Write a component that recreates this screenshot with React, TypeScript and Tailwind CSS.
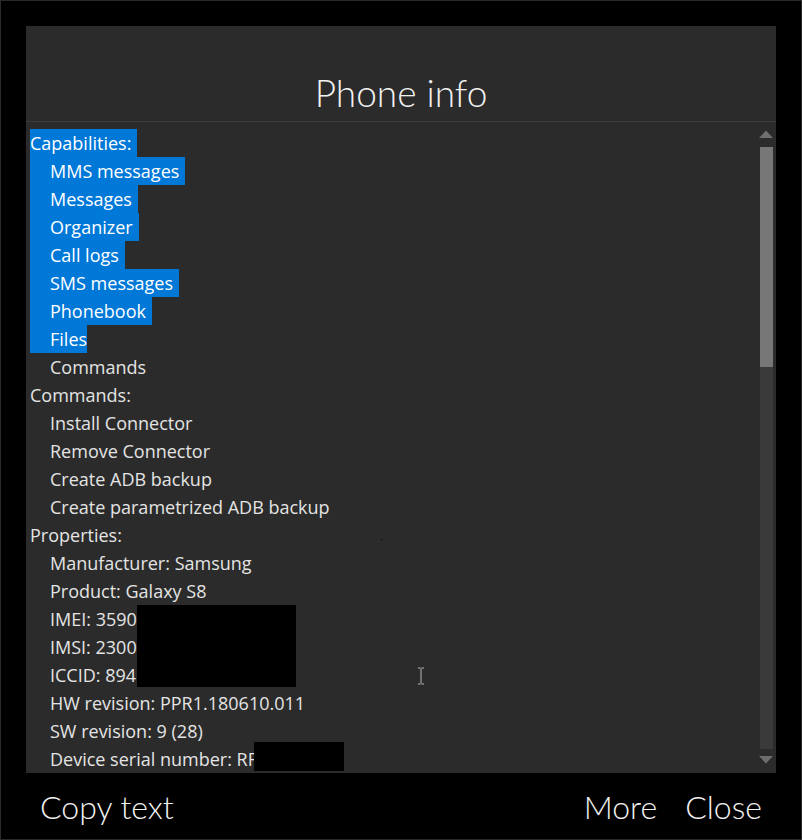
import React from 'react';

type Row = { text: string; indent?: boolean; selected?: boolean };

const rows: Row[] = [
  { text: 'Capabilities:', selected: true },
  { text: 'MMS messages', indent: true, selected: true },
  { text: 'Messages', indent: true, selected: true },
  { text: 'Organizer', indent: true, selected: true },
  { text: 'Call logs', indent: true, selected: true },
  { text: 'SMS messages', indent: true, selected: true },
  { text: 'Phonebook', indent: true, selected: true },
  { text: 'Files', indent: true, selected: true },
  { text: 'Commands', indent: true },
  { text: 'Commands:' },
  { text: 'Install Connector', indent: true },
  { text: 'Remove Connector', indent: true },
  { text: 'Create ADB backup', indent: true },
  { text: 'Create parametrized ADB backup', indent: true },
  { text: 'Properties:' },
  { text: 'Manufacturer: Samsung', indent: true },
  { text: 'Product: Galaxy S8', indent: true },
  { text: 'IMEI: 3590', indent: true },
  { text: 'IMSI: 2300', indent: true },
  { text: 'ICCID: 894', indent: true },
  { text: 'HW revision: PPR1.180610.011', indent: true },
  { text: 'SW revision: 9 (28)', indent: true },
  { text: 'Device serial number: RF', indent: true },
];

function Line({ row, last }: { row: Row; last: boolean }) {
  return (
    <div className="flex h-[28px] items-center">
      <div className={`flex h-full items-center ${row.selected ? 'bg-[#0078d7] text-white' : 'text-[#e4e4e4]'}`}>
        {row.indent && <span className="w-[20px]" />}
        <span className={row.selected && !last ? 'pr-[6px]' : ''}>{row.text}</span>
      </div>
    </div>
  );
}

export default function App() {
  return (
    <div
      className="w-[802px] h-[840px] bg-black border border-[#2a2a2a] flex flex-col"
      style={{ fontFamily: '"Open Sans", "Noto Sans", sans-serif' }}
    >
      <div className="mx-[25px] mt-[25px] h-[747px] bg-[#2b2b2b] flex flex-col">
        <div className="h-[96px] shrink-0 border-b border-[#3d3d3d] flex items-end justify-center pb-[10px]">
          <h1 className="text-[37px] font-light text-[#f2f2f2] leading-none" style={{ fontFamily: 'Lato, "Open Sans", sans-serif' }}>
            Phone info
          </h1>
        </div>
        <div className="flex-1 flex min-h-0 overflow-hidden relative">
          <div className="flex-1 pt-[7px] pl-[4px] text-[18px] leading-none">
            {rows.map((r, i) => (
              <Line key={i} row={r} last={r.text === 'Files'} />
            ))}
          </div>
          {/* redaction boxes */}
          <div className="absolute left-[111px] top-[483px] w-[159px] h-[82px] bg-black" />
          <div className="absolute left-[228px] top-[620px] w-[90px] h-[29px] bg-black" />
          <div className="absolute left-[355px] top-[417px] w-[1px] h-[1px] bg-black" />
          {/* text cursor */}
          <svg className="absolute left-[391px] top-[545px]" width="8" height="18" viewBox="0 0 8 18">
            <path d="M1 1h2.5M4.5 1H7M4 1.5v15M1 17h2.5M4.5 17H7" stroke="#bbbbbb" strokeWidth="1" fill="none" />
          </svg>
          {/* scrollbar */}
          <div className="w-[20px] shrink-0 flex flex-col items-center pt-[8px] pb-[9px]">
            <svg width="16" height="9" viewBox="0 0 16 9">
              <path d="M8 0.5L15 8H1z" fill="#6e6e6e" />
            </svg>
            <div className="mt-[8px] w-[13px] flex-1 bg-[#3a3a3a] flex flex-col">
              <div className="h-[220px] bg-[#777777]" />
            </div>
            <svg className="mt-[6px]" width="16" height="9" viewBox="0 0 16 9">
              <path d="M1 1h14L8 8.5z" fill="#6e6e6e" />
            </svg>
          </div>
        </div>
      </div>
      <div
        className="flex-1 flex items-center pl-[39px] pr-[39px] pt-[2px] text-[32px] font-light text-[#f2f2f2] leading-none"
        style={{ fontFamily: 'Lato, "Open Sans", sans-serif' }}
      >
        <span>Copy text</span>
        <span className="ml-auto">More</span>
        <span className="ml-[28px]">Close</span>
      </div>
    </div>
  );
}
